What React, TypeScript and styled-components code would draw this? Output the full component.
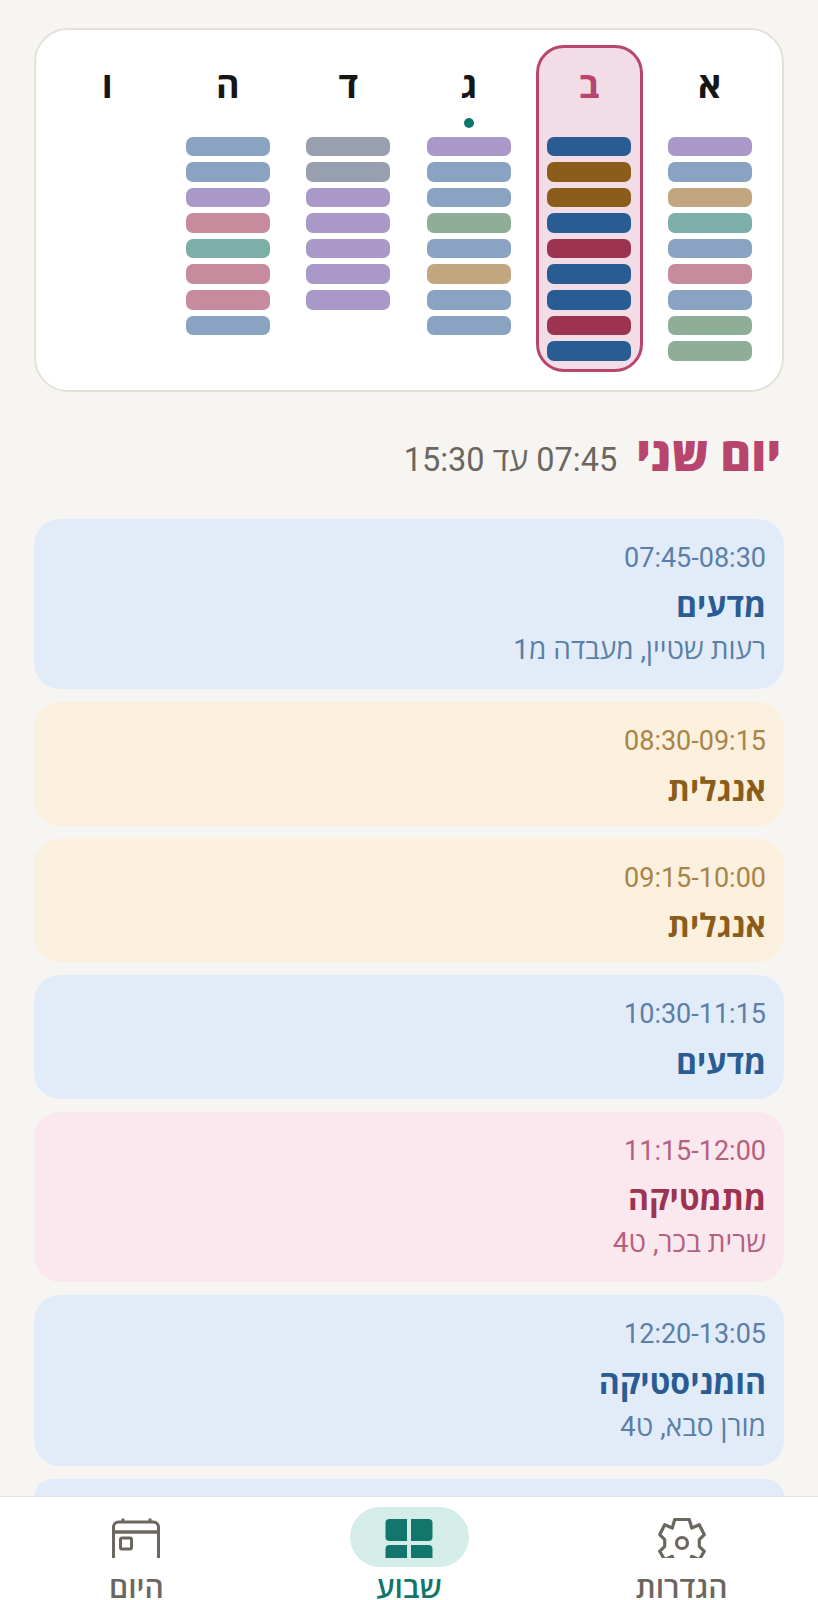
import React from 'react';
import styled, { createGlobalStyle } from 'styled-components';

const GlobalStyle = createGlobalStyle`
  html, body {
    margin: 0;
    padding: 0;
    background: #f6f5f1;
  }
  * {
    box-sizing: border-box;
  }
`;

const Screen = styled.div`
  width: 818px;
  height: 1600px;
  display: flex;
  flex-direction: column;
  overflow: hidden;
  direction: rtl;
  background: #f6f5f1;
  font-family: Roboto, "Noto Sans", "Open Sans", "Liberation Sans", sans-serif;
`;

const Content = styled.main`
  flex: 1;
  min-height: 0;
  overflow: hidden;
  padding: 28px 34px 0 34px;
`;

const WeekCard = styled.section`
  display: grid;
  grid-template-columns: repeat(6, 1fr);
  column-gap: 14px;
  padding: 15px 19px 18px 18px;
  background: #ffffff;
  border: 2px solid #e4e1d7;
  border-radius: 34px;
`;

const DayColumn = styled.div<{ $selected?: boolean }>`
  display: flex;
  flex-direction: column;
  align-items: center;
  padding: 13px 8.25px 8px;
  border: 3px solid ${(p) => (p.$selected ? '#b8456e' : 'transparent')};
  border-radius: 28px;
  background: ${(p) => (p.$selected ? '#f2dde6' : 'transparent')};
`;

const DayLetter = styled.div<{ $selected?: boolean }>`
  font-size: 36px;
  font-weight: 700;
  line-height: 50px;
  color: ${(p) => (p.$selected ? '#b8456e' : '#161616')};
`;

const DotSlot = styled.div`
  height: 25.5px;
  width: 100%;
  display: flex;
  justify-content: center;
  padding-top: 7px;
`;

const TodayDot = styled.span`
  width: 10px;
  height: 10px;
  border-radius: 50%;
  background: #0f766e;
`;

const BarStack = styled.div`
  width: 100%;
  display: flex;
  flex-direction: column;
  gap: 6px;
`;

const Bar = styled.div<{ $color: string }>`
  height: 19.6px;
  border-radius: 7px;
  background: ${(p) => p.$color};
`;

const DayHeader = styled.header`
  display: flex;
  align-items: baseline;
  gap: 19px;
  height: 127px;
  padding: 35px 3px 0 0;
`;

const DayTitle = styled.h1`
  margin: 0;
  font-size: 47px;
  font-weight: 800;
  line-height: 56px;
  color: #b8456e;
`;

const DayHours = styled.span`
  font-size: 32.5px;
  color: #6b675f;
`;

const LessonList = styled.div`
  display: flex;
  flex-direction: column;
  gap: 13px;
`;

const tones = {
  blue: { bg: '#e2ecf9', time: '#5a7fa8', title: '#2a5c94' },
  amber: { bg: '#faf0dd', time: '#aa8348', title: '#8b5c1a' },
  rose: { bg: '#fbe8ef', time: '#b5607f', title: '#9c3350' },
};

type Tone = keyof typeof tones;

const LessonCard = styled.article<{ $tone: Tone }>`
  padding: 20px 18px 16px;
  border-radius: 26px;
  background: ${(p) => tones[p.$tone].bg};
`;

const LessonTime = styled.div<{ $tone: Tone }>`
  font-size: 27px;
  line-height: 38px;
  color: ${(p) => tones[p.$tone].time};
`;

const LessonTitle = styled.div<{ $tone: Tone }>`
  margin-top: 9.5px;
  font-size: 32px;
  font-weight: 700;
  line-height: 40px;
  color: ${(p) => tones[p.$tone].title};
`;

const LessonPlace = styled.div<{ $tone: Tone }>`
  font-size: 28px;
  line-height: 47px;
  color: ${(p) => tones[p.$tone].time};
`;

const BottomNav = styled.nav`
  flex: none;
  height: 104px;
  display: grid;
  grid-template-columns: repeat(3, 1fr);
  overflow: hidden;
  background: #ffffff;
  border-top: 1px solid #e8e5de;
`;

const NavItem = styled.div<{ $active?: boolean }>`
  display: flex;
  flex-direction: column;
  align-items: center;
  padding-top: 10px;
  color: ${(p) => (p.$active ? '#12766c' : '#6b675f')};
`;

const IconPill = styled.div<{ $active?: boolean }>`
  width: 119px;
  height: 60px;
  flex: none;
  display: flex;
  align-items: flex-start;
  justify-content: center;
  padding-top: 11px;
  border-radius: 30px;
  background: ${(p) => (p.$active ? '#d5ede8' : 'transparent')};
`;

const IconClip = styled.div`
  width: 54px;
  height: 40px;
  overflow: hidden;
  display: flex;
  justify-content: center;
  align-items: flex-start;
  svg {
    flex: none;
    margin-top: -5px;
  }
`;

const NavLabel = styled.span`
  margin-top: 9px;
  font-size: 30px;
  font-weight: 600;
  line-height: 24px;
  white-space: nowrap;
`;

const GearIcon = () => (
  <svg width="54" height="58" viewBox="0 0 54 58" fill="none" stroke="currentColor" strokeWidth="3.2" strokeLinejoin="round">
    <path d="M19.7 6.5H34.3L36.7 15L44.3 11.7L49.3 21.7L44.3 26.7V33.3L49.3 38.3L44.3 46.7L36.7 43.3L34.3 53.5H19.7L17.3 43.3L9.7 46.7L4.7 38.3L9.7 33.3V26.7L4.7 21.7L9.7 11.7L17.3 15Z" />
    <circle cx="27" cy="30" r="5.5" />
  </svg>
);

const CalendarIcon = () => (
  <svg width="54" height="48" viewBox="0 0 54 48" fill="none" stroke="currentColor" strokeWidth="3">
    <path d="M4.5 46V14a5 5 0 0 1 5-5h35a5 5 0 0 1 5 5v32" />
    <path d="M4.5 19h45" strokeWidth="3.6" />
    <path d="M14 5.5v4M41 5.5v4" />
    <rect x="11.5" y="25" width="11" height="11" rx="1.5" />
  </svg>
);

const GridIcon = () => (
  <svg width="54" height="48" viewBox="0 0 54 48" fill="currentColor">
    <path d="M3.5 10a4 4 0 0 1 4-4H25v22H7.5a4 4 0 0 1-4-4zM29 6h17.5a4 4 0 0 1 4 4v14a4 4 0 0 1-4 4H29z" />
    <path d="M3.5 36a4 4 0 0 1 4-4H25v14H3.5zM29 32h17.5a4 4 0 0 1 4 4v10H29z" />
  </svg>
);

const p = '#a998c8';
const b = '#8aa3c2';
const t = '#c1a67f';
const g = '#7dafa9';
const r = '#c68c9e';
const s = '#8fae98';
const n = '#989fae';
const B = '#2a5c94';
const M = '#8b5c1a';
const C = '#9c3350';

const days = [
  { letter: 'א', bars: [p, b, t, g, b, r, b, s, s] },
  { letter: 'ב', selected: true, bars: [B, M, M, B, C, B, B, C, B] },
  { letter: 'ג', today: true, bars: [p, b, b, s, b, t, b, b] },
  { letter: 'ד', bars: [n, n, p, p, p, p, p] },
  { letter: 'ה', bars: [b, b, p, r, g, r, r, b] },
  { letter: 'ו', bars: [] as string[] },
];

const lessons: { time: string; title: string; place?: string; tone: Tone }[] = [
  { time: '07:45-08:30', title: 'מדעים', place: 'רעות שטיין, מעבדה מ1', tone: 'blue' },
  { time: '08:30-09:15', title: 'אנגלית', tone: 'amber' },
  { time: '09:15-10:00', title: 'אנגלית', tone: 'amber' },
  { time: '10:30-11:15', title: 'מדעים', tone: 'blue' },
  { time: '11:15-12:00', title: 'מתמטיקה', place: 'שרית בכר, ט4', tone: 'rose' },
  { time: '12:20-13:05', title: 'הומניסטיקה', place: 'מורן סבא, ט4', tone: 'blue' },
];

export default function App() {
  return (
    <Screen>
      <GlobalStyle />
      <Content>
        <WeekCard>
          {days.map((day) => (
            <DayColumn key={day.letter} $selected={day.selected}>
              <DayLetter $selected={day.selected}>{day.letter}</DayLetter>
              <DotSlot>{day.today && <TodayDot />}</DotSlot>
              <BarStack>
                {day.bars.map((color, i) => (
                  <Bar key={i} $color={color} />
                ))}
              </BarStack>
            </DayColumn>
          ))}
        </WeekCard>

        <DayHeader>
          <DayTitle>יום שני</DayTitle>
          <DayHours>07:45 עד 15:30</DayHours>
        </DayHeader>

        <LessonList>
          {lessons.map((lesson) => (
            <LessonCard key={lesson.time} $tone={lesson.tone}>
              <LessonTime $tone={lesson.tone}>{lesson.time}</LessonTime>
              <LessonTitle $tone={lesson.tone}>{lesson.title}</LessonTitle>
              {lesson.place && <LessonPlace $tone={lesson.tone}>{lesson.place}</LessonPlace>}
            </LessonCard>
          ))}
          <LessonCard $tone="blue" />
        </LessonList>
      </Content>

      <BottomNav>
        <NavItem>
          <IconPill>
            <IconClip>
              <GearIcon />
            </IconClip>
          </IconPill>
          <NavLabel>הגדרות</NavLabel>
        </NavItem>
        <NavItem $active>
          <IconPill $active>
            <IconClip>
              <GridIcon />
            </IconClip>
          </IconPill>
          <NavLabel>שבוע</NavLabel>
        </NavItem>
        <NavItem>
          <IconPill>
            <IconClip>
              <CalendarIcon />
            </IconClip>
          </IconPill>
          <NavLabel>היום</NavLabel>
        </NavItem>
      </BottomNav>
    </Screen>
  );
}
